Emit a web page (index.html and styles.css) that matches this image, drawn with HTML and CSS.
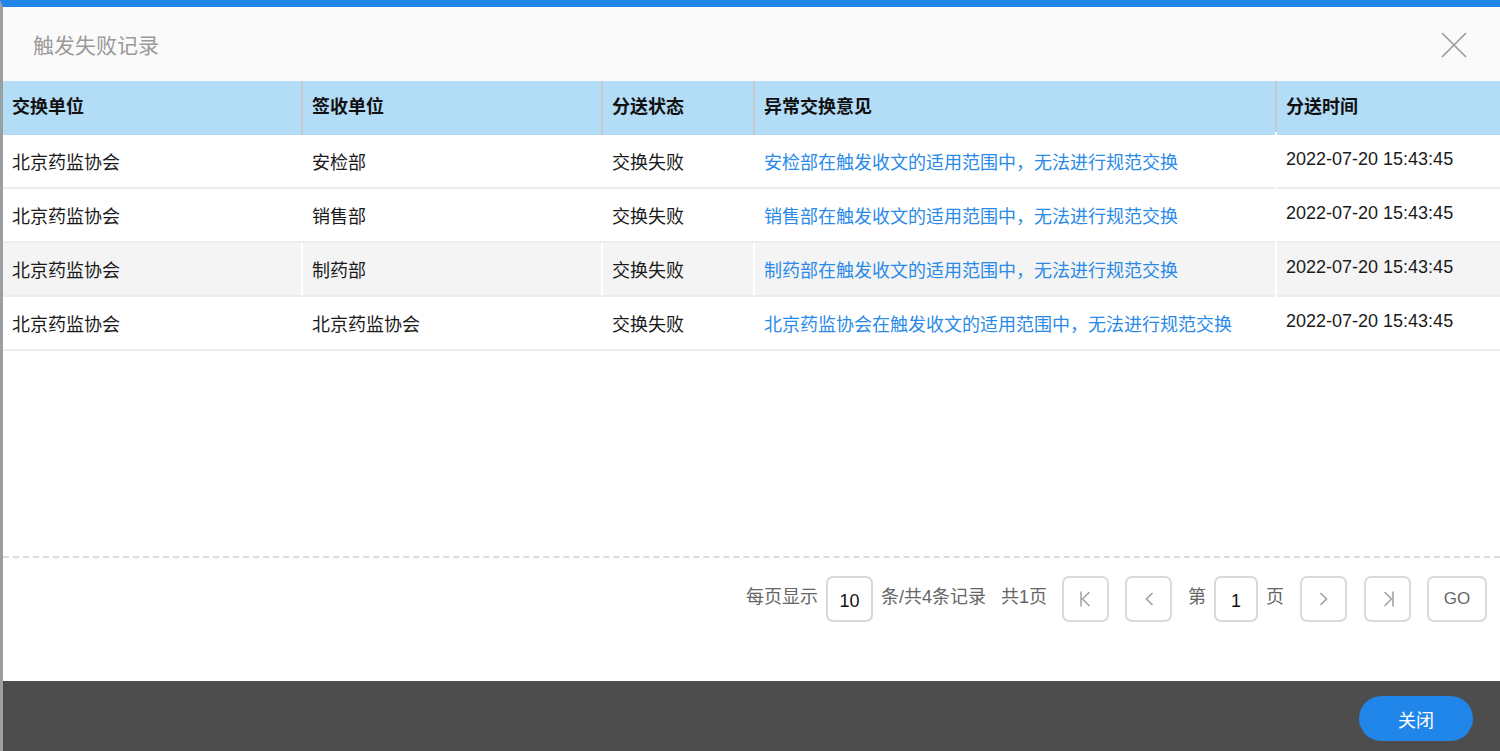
FILE: index.html
```html
<!DOCTYPE html>
<html lang="zh">
<head>
<meta charset="utf-8">
<title>触发失败记录</title>
<link rel="stylesheet" href="styles.css">
</head>
<body>
<div class="dialog">
  <div class="dlg-head">
    <span class="dlg-title">触发失败记录</span>
    <svg class="dlg-close" width="26" height="26" viewBox="0 0 26 26"><path d="M1 1 L25 25 M25 1 L1 25" stroke="#9a9a9a" stroke-width="1.6" fill="none"/></svg>
  </div>
  <div class="dlg-body">
    <div class="table">
      <div class="row head">
        <div class="cell">交换单位</div>
        <div class="cell">签收单位</div>
        <div class="cell">分送状态</div>
        <div class="cell">异常交换意见</div>
        <div class="cell">分送时间</div>
      </div>
      <div class="row">
        <div class="cell">北京药监协会</div>
        <div class="cell">安检部</div>
        <div class="cell">交换失败</div>
        <div class="cell link">安检部在触发收文的适用范围中，无法进行规范交换</div>
        <div class="cell num">2022-07-20 15:43:45</div>
      </div>
      <div class="row">
        <div class="cell">北京药监协会</div>
        <div class="cell">销售部</div>
        <div class="cell">交换失败</div>
        <div class="cell link">销售部在触发收文的适用范围中，无法进行规范交换</div>
        <div class="cell num">2022-07-20 15:43:45</div>
      </div>
      <div class="row alt">
        <div class="cell">北京药监协会</div>
        <div class="cell">制药部</div>
        <div class="cell">交换失败</div>
        <div class="cell link">制药部在触发收文的适用范围中，无法进行规范交换</div>
        <div class="cell num">2022-07-20 15:43:45</div>
      </div>
      <div class="row">
        <div class="cell">北京药监协会</div>
        <div class="cell">北京药监协会</div>
        <div class="cell">交换失败</div>
        <div class="cell link">北京药监协会在触发收文的适用范围中，无法进行规范交换</div>
        <div class="cell num">2022-07-20 15:43:45</div>
      </div>
    </div>
  </div>
  <div class="pager">
    <span class="ptext">每页显示</span>
    <span class="pbox pbox-size">10</span>
    <span class="ptext">条/共4条记录</span>
    <span class="ptext gap15">共1页</span>
    <span class="pbtn gap15"><svg width="16" height="18" viewBox="0 0 16 18"><path d="M3 1.5 V16.5 M11.5 2 L4.5 9 L11.5 16" stroke="#a0a0a0" stroke-width="1.5" fill="none"/></svg></span>
    <span class="pbtn gap16"><svg width="12" height="18" viewBox="0 0 12 18"><path d="M9.5 3 L3.5 9 L9.5 15" stroke="#a0a0a0" stroke-width="1.6" fill="none"/></svg></span>
    <span class="ptext gap16">第</span>
    <span class="pbox pbox-page">1</span>
    <span class="ptext">页</span>
    <span class="pbtn gap16"><svg width="12" height="18" viewBox="0 0 12 18"><path d="M2.5 3 L8.5 9 L2.5 15" stroke="#a0a0a0" stroke-width="1.6" fill="none"/></svg></span>
    <span class="pbtn gap17"><svg width="16" height="18" viewBox="0 0 16 18"><path d="M13 1.5 V16.5 M4.5 2 L11.5 9 L4.5 16" stroke="#a0a0a0" stroke-width="1.5" fill="none"/></svg></span>
    <span class="pbtn pbtn-go gap16">GO</span>
  </div>
  <div class="dlg-foot">
    <button class="btn-close">关闭</button>
  </div>
</div>
</body>
</html>
```

FILE: styles.css
```css
html, body {
  margin: 0;
  padding: 0;
}
body {
  width: 1500px;
  height: 751px;
  overflow: hidden;
  font-family: "Liberation Sans", "Noto Sans CJK SC", sans-serif;
  background: #fff;
}
.dialog {
  box-sizing: border-box;
  height: 751px;
  border-left: 3px solid #9b9ea2;
  border-top: 7px solid #2186e9;
  display: flex;
  flex-direction: column;
  background: #fff;
}
.dlg-head {
  height: 74px;
  flex: none;
  background: #fafafa;
  display: flex;
  align-items: center;
  justify-content: space-between;
  padding: 0 33px 0 30px;
}
.dlg-title {
  font-size: 21px;
  color: #9a9a9a;
}
.dlg-close {
  display: block;
  margin-top: 2px;
}
.dlg-body {
  height: 475px;
  flex: none;
  border-bottom: 2px dashed #dcdcdc;
}
.row {
  display: grid;
  grid-template-columns: 298px 300px 152px 522px 1fr;
  height: 54px;
  box-sizing: border-box;
  border-bottom: 2px solid #ededed;
  font-size: 18px;
  color: #1a1a1a;
}
.row.alt {
  background: #f4f4f4;
}
.row.head {
  background: #b3dcf7;
  border-bottom: none;
  font-weight: bold;
  color: #111;
}
.row.head .cell {
  padding-bottom: 6px;
}
.cell {
  display: flex;
  align-items: center;
  padding-left: 9px;
  white-space: nowrap;
  overflow: hidden;
}
.row .cell + .cell {
  border-left: 2px solid #fff;
  padding-left: 9px;
}
.row.head .cell + .cell {
  border-left-color: #c3c9cf;
}
.cell.link {
  color: #2a8ae8;
}
.cell.num {
  margin-top: -3px;
}
.pager {
  height: 123px;
  flex: none;
  display: flex;
  align-items: flex-start;
  justify-content: flex-end;
  padding: 18px 13px 0 0;
  box-sizing: border-box;
  font-size: 18px;
  color: #666;
}
.ptext {
  height: 46px;
  line-height: 42px;
  margin-left: 8px;
}
.pbox {
  box-sizing: border-box;
  height: 46px;
  border: 2px solid #d8d8d8;
  border-radius: 7px;
  display: flex;
  align-items: center;
  justify-content: center;
  color: #111;
  margin-left: 8px;
  padding-top: 4px;
}
.pbox-size { width: 47px; }
.pbox-page { width: 44px; }
.pbtn {
  box-sizing: border-box;
  width: 47px;
  height: 46px;
  border: 2px solid #dadada;
  border-radius: 7px;
  display: flex;
  align-items: center;
  justify-content: center;
}
.pbtn-go {
  width: 60px;
  font-size: 17px;
  color: #666;
}
.gap15 { margin-left: 15px; }
.gap16 { margin-left: 16px; }
.gap17 { margin-left: 17px; }
.dlg-foot {
  flex: 1;
  background: #4d4d4d;
  display: flex;
  justify-content: flex-end;
  align-items: flex-start;
  padding: 15px 27px 0 0;
}
.btn-close {
  width: 114px;
  height: 45px;
  border: none;
  border-radius: 23px;
  background: #2186e9;
  color: #fff;
  font-family: "Liberation Sans", "Noto Sans CJK SC", sans-serif;
  font-size: 18px;
  padding: 0;
}
```
